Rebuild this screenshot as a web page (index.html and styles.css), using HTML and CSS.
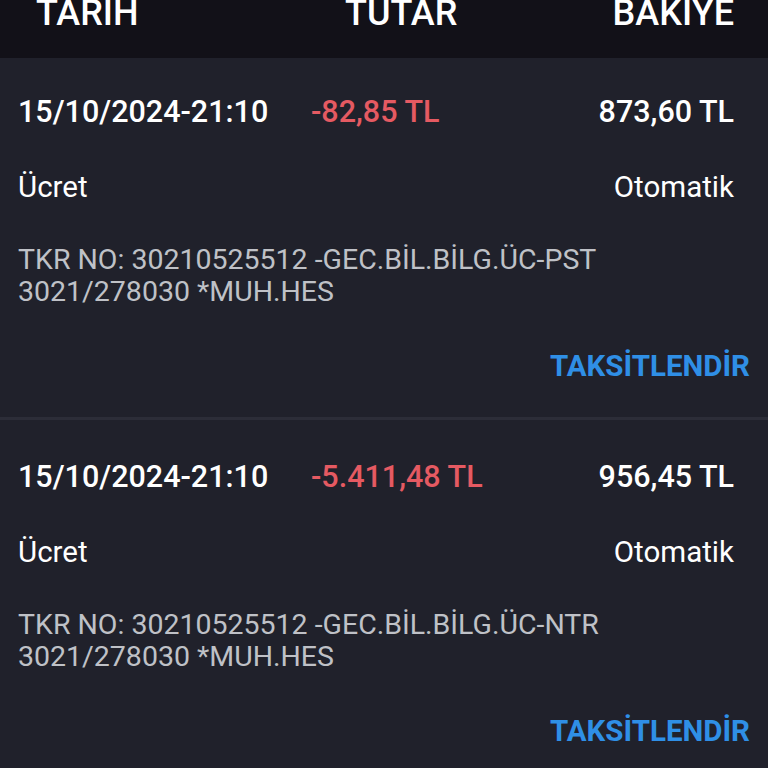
FILE: index.html
```html
<!DOCTYPE html>
<html lang="tr">
<head>
<meta charset="utf-8">
<link rel="stylesheet" href="styles.css">
</head>
<body>
<div class="page">
  <div class="header">
    <span class="h-col">TARIH</span>
    <span class="h-col">TUTAR</span>
    <span class="h-col h-balance">BAKIYE</span>
  </div>
  <div class="card">
    <div class="row-main">
      <span class="date">15/10/2024-21:10</span>
      <span class="amount">-82,85 TL</span>
      <span class="balance">873,60 TL</span>
    </div>
    <div class="row-type">
      <span>Ücret</span>
      <span>Otomatik</span>
    </div>
    <div class="desc">TKR NO: 30210525512 -GEC.BİL.BİLG.ÜC-PST<br>3021/278030 *MUH.HES</div>
    <div class="action"><span class="link">TAKSİTLENDİR</span></div>
  </div>
  <div class="card">
    <div class="row-main">
      <span class="date">15/10/2024-21:10</span>
      <span class="amount">-5.411,48 TL</span>
      <span class="balance">956,45 TL</span>
    </div>
    <div class="row-type">
      <span>Ücret</span>
      <span>Otomatik</span>
    </div>
    <div class="desc">TKR NO: 30210525512 -GEC.BİL.BİLG.ÜC-NTR<br>3021/278030 *MUH.HES</div>
    <div class="action"><span class="link">TAKSİTLENDİR</span></div>
  </div>
</div>
</body>
</html>
```
FILE: styles.css
```css
html, body {
  margin: 0;
  padding: 0;
  background: #20212b;
}
body {
  width: 768px;
  height: 768px;
  overflow: hidden;
  font-family: Roboto, "Liberation Sans", sans-serif;
  color: #ffffff;
}
.page {
  display: flex;
  flex-direction: column;
}
.header {
  height: 58px;
  background: #121118;
  display: grid;
  grid-template-columns: 309px 1fr auto;
  align-items: start;
  padding: 0 34px 0 36px;
  box-sizing: border-box;
  overflow: hidden;
}
.h-col {
  font-size: 36px;
  line-height: 36px;
  font-weight: 500;
  margin-top: -5px;
}
.h-balance { text-align: right; }
.card {
  padding: 36px 18px 34px 18px;
  border-bottom: 3px solid #2c2d38;
  margin-bottom: 3px;
}
.row-main {
  display: grid;
  grid-template-columns: 293px 1fr auto;
  padding-right: 16px;
  font-size: 30.5px;
  line-height: 36px;
  font-weight: 500;
}
.amount { color: #e55a62; }
.balance { text-align: right; }
.row-type {
  display: flex;
  justify-content: space-between;
  padding-right: 16px;
  margin-top: 39px;
  font-size: 29.5px;
  line-height: 36px;
}
.desc {
  margin-top: 39px;
  font-size: 28.5px;
  line-height: 32px;
  color: #bfc1c7;
}
.action {
  display: flex;
  justify-content: flex-end;
  margin-top: 41px;
}
.link {
  color: #2f8fe6;
  font-size: 29.5px;
  line-height: 34px;
  font-weight: 700;
}
```
